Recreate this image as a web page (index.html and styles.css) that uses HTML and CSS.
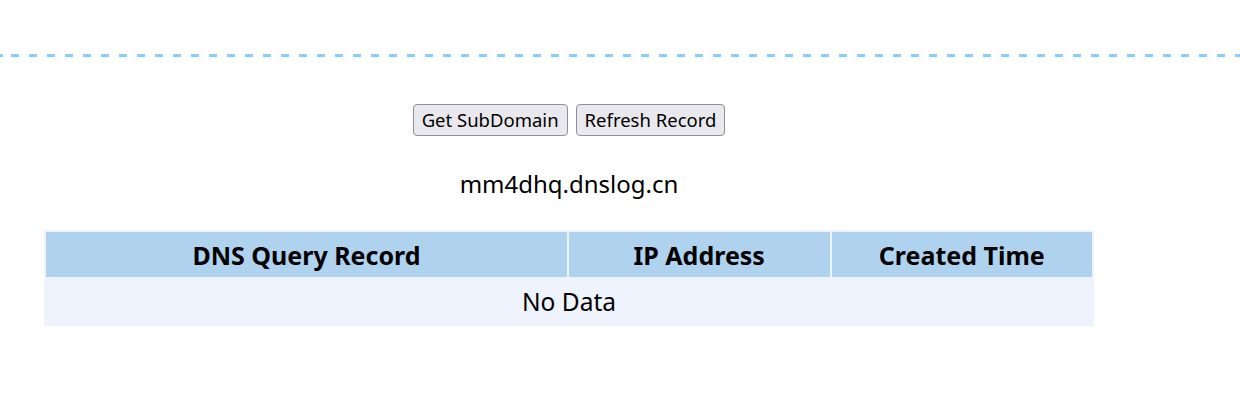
FILE: index.html
```html
<!DOCTYPE html>
<html>
<head>
<meta charset="utf-8">
<link rel="stylesheet" href="styles.css">
</head>
<body>
<div class="divider"></div>
<main class="wrap">
  <div class="actions">
    <button class="btn">Get SubDomain</button>
    <button class="btn">Refresh Record</button>
  </div>
  <p class="domain">mm4dhq.dnslog.cn</p>
  <table class="records">
    <thead>
      <tr>
        <th class="c-wide">DNS Query Record</th>
        <th class="c-narrow">IP Address</th>
        <th class="c-narrow">Created Time</th>
      </tr>
    </thead>
    <tbody>
      <tr><td colspan="3">No Data</td></tr>
    </tbody>
  </table>
</main>
</body>
</html>
```
FILE: styles.css
```css
html, body {
  margin: 0;
  padding: 0;
  background: #ffffff;
  font-family: "Noto Sans", "Open Sans", sans-serif;
  color: #000;
}
.divider {
  margin-top: 54px;
  height: 3px;
  background-image: repeating-linear-gradient(to right, #87cefa 0 8px, transparent 8px 18px);
  background-position: 11px 0;
}
.wrap {
  width: 1138px;
  display: flex;
  flex-direction: column;
  align-items: center;
}
.actions {
  margin-top: 47px;
  display: flex;
  gap: 8px;
}
.btn {
  font-family: "Noto Sans", sans-serif;
  font-size: 18.5px;
  height: 32px;
  padding: 0 8px;
  background: #e9e9ed;
  border: 1px solid #8f8f9d;
  border-radius: 4px;
  color: #000;
  line-height: 1;
}
.domain {
  margin: 33px 0 0;
  font-size: 24px;
  line-height: 30px;
}
.records {
  margin-top: 31px;
  width: 1050px;
  border-collapse: separate;
  border-spacing: 2px;
  background: #eef3fd;
}
.records th {
  background: #afd3ef;
  font-size: 25px;
  font-weight: 700;
  height: 45px;
  padding: 0;
}
.records .c-wide { width: 50%; }
.records .c-narrow { width: 25%; }
.records td {
  text-align: center;
  font-size: 24.5px;
  height: 45px;
  padding: 0;
}
```
